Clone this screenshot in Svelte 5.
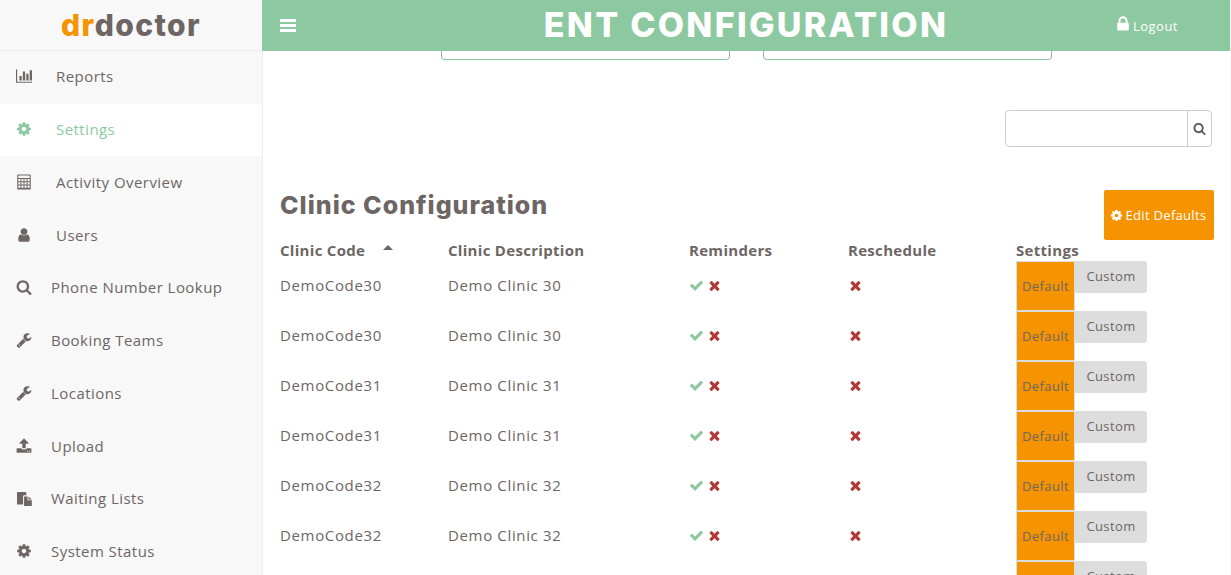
<script>
    // calculator: outer frame with a top band and a 4x3 grid of keys cut out
    let calc = 'M200 60h1392q60 0 60 60v1560q0 60-60 60h-1392q-60 0-60-60v-1560q0-60 60-60zM260 180v260h1272v-260z';
    for (const y of [560, 920, 1280]) {
        for (const x of [260, 604, 948, 1292]) {
            calc += `M${x} ${y}v260h240v-260z`;
        }
    }

    const icons = {
        chart: 'M640 896v512h-256v-512h256zm384-512v1024h-256v-1024h256zm1024 1152v128h-2048v-1536h128v1408h1920zm-640-896v768h-256v-768h256zm384-384v1152h-256v-1152h256z',
        cog: 'M1152 896q0-106-75-181t-181-75-181 75-75 181 75 181 181 75 181-75 75-181zm512-109v222q0 12-8 23t-20 13l-185 28q-19 54-39 91 35 50 107 138 10 12 10 25t-9 23q-27 37-99 108t-94 71q-12 0-26-9l-138-108q-44 23-91 38-16 136-29 186-7 28-36 28h-222q-14 0-24.5-8.5t-11.5-21.5l-28-184q-49-16-90-37l-141 107q-10 9-25 9-14 0-25-11-126-114-165-168-7-10-7-23 0-12 8-23 15-21 51-66.5t54-70.5q-27-50-41-99l-183-27q-13-2-21-12.5t-8-23.5v-222q0-12 8-23t19-13l186-28q14-46 39-92-40-57-107-138-10-12-10-24 0-10 9-23 26-36 98.5-107.5t94.5-71.5q13 0 26 10l138 107q44-23 91-38 16-136 29-186 7-28 36-28h222q14 0 24.5 8.5t11.5 21.5l28 184q49 16 90 37l142-107q9-9 24-9 13 0 25 10 129 119 165 170 7 8 7 22 0 12-8 23-15 21-51 66.5t-54 70.5q26 50 41 98l183 28q13 2 21 12.5t8 23.5z',
        table: calc,
        user: 'M1536 1399q0 109-62.5 187t-150.5 78h-854q-88 0-150.5-78t-62.5-187q0-85 8.5-160.5t31.5-152 58.5-131 94-89 134.5-34.5q131 128 313 128t313-128q76 0 134.5 34.5t94 89 58.5 131 31.5 152 8.5 160.5zm-256-887q0 159-112.5 271.5t-271.5 112.5-271.5-112.5-112.5-271.5 112.5-271.5 271.5-112.5 271.5 112.5 112.5 271.5z',
        search: 'M1216 832q0-185-131.5-316.5t-316.5-131.5-316.5 131.5-131.5 316.5 131.5 316.5 316.5 131.5 316.5-131.5 131.5-316.5zm512 832q0 52-38 90t-90 38q-54 0-90-38l-343-342q-179 124-399 124-143 0-273.5-55.5t-225-150-150-225-55.5-273.5 55.5-273.5 150-225 225-150 273.5-55.5 273.5 55.5 225 150 150 225 55.5 273.5q0 220-124 399l343 343q37 37 37 90z',
        wrench: 'M448 1472q0-26-19-45t-45-19-45 19-19 45 19 45 45 19 45-19 19-45zm644-420l-682 682q-37 37-90 37-52 0-91-37l-106-108q-38-36-38-90 0-53 38-91l681-681q39 98 114.5 173.5t173.5 114.5zm634-435q0 39-23 106-47 134-164.5 217.5t-258.5 83.5q-185 0-316.5-131.5t-131.5-316.5 131.5-316.5 316.5-131.5q58 0 121.5 16.5t107.5 46.5q16 11 16 28t-16 28l-293 169v224l193 107q5-3 79-48.5t135.5-81 70.5-35.5q15 0 23.5 10t8.5 25z',
        upload: 'M1344 1472q0-26-19-45t-45-19-45 19-19 45 19 45 45 19 45-19 19-45zm256 0q0-26-19-45t-45-19-45 19-19 45 19 45 45 19 45-19 19-45zm128-224v320q0 40-28 68t-68 28h-1472q-40 0-68-28t-28-68v-320q0-40 28-68t68-28h427q21 56 70.5 92t110.5 36h256q61 0 110.5-36t70.5-92h427q40 0 68 28t28 68zm-325-648q-17 40-59 40h-256v448q0 26-19 45t-45 19h-256q-26 0-45-19t-19-45v-448h-256q-42 0-59-40-17-39 14-69l448-448q18-19 45-19t45 19l448 448q31 30 14 69z',
        files: 'M112 300q0-70 70-70h900q70 0 70 70v300h-240q-120 0-120 120v900h-610q-70 0-70-70zM900 720h400v440h470v570q0 60-60 60h-750q-60 0-60-60zM1400 720l370 340h-370z',
        lock: 'M640 768h512v-192q0-106-75-181t-181-75-181 75-75 181v192zm832 96v576q0 40-28 68t-68 28h-960q-40 0-68-28t-28-68v-576q0-40 28-68t68-28h32v-192q0-184 132-316t316-132 316 132 132 316v192h32q40 0 68 28t28 68z',
        check: 'M1671 566q0 40-28 68l-724 724-136 136q-28 28-68 28t-68-28l-136-136-362-362q-28-28-28-68t28-68l136-136q28-28 68-28t68 28l294 295 656-657q28-28 68-28t68 28l136 136q28 28 28 68z',
        times: 'M1490 1322q0 40-28 68l-136 136q-28 28-68 28t-68-28l-294-294-294 294q-28 28-68 28t-68-28l-136-136q-28-28-28-68t28-68l294-294-294-294q-28-28-28-68t28-68l136-136q28-28 68-28t68 28l294 294 294-294q28-28 68-28t68 28l136 136q28 28 28 68t-28 68l-294 294 294 294q28 28 28 68z'
    };

    const links = [
        { name: 'Reports', icon: 'chart', wide: true },
        { name: 'Settings', icon: 'cog', wide: true, active: true },
        { name: 'Activity Overview', icon: 'table', wide: true },
        { name: 'Users', icon: 'user', wide: true },
        { name: 'Phone Number Lookup', icon: 'search' },
        { name: 'Booking Teams', icon: 'wrench' },
        { name: 'Locations', icon: 'wrench' },
        { name: 'Upload', icon: 'upload' },
        { name: 'Waiting Lists', icon: 'files' },
        { name: 'System Status', icon: 'cog' }
    ];

    const clinics = [30, 30, 31, 31, 32, 32, 33];
</script>

{#snippet icon(name, cls)}
    <svg class="icon {cls}" viewBox="0 0 1792 1792" fill="currentColor" aria-hidden="true"><path d={icons[name]} /></svg>
{/snippet}

<div class="page">
    <aside class="sidebar">
        <div class="logo"><span class="dr">dr</span>doctor</div>
        <nav>
            {#each links as link (link.name)}
                <a class="item" class:active={link.active} class:wide={link.wide} href="#{link.icon}">
                    {@render icon(link.icon, 'nav-icon')}
                    <span>{link.name}</span>
                </a>
            {/each}
        </nav>
    </aside>

    <main>
        <header>
            <div class="bars"><i></i><i></i><i></i></div>
            <h1>ENT CONFIGURATION</h1>
            <a class="logout" href="#logout">{@render icon('lock', 'lock')}Logout</a>
        </header>

        <div class="content">
            <div class="filters">
                <div class="filter"></div>
                <div class="filter"></div>
            </div>

            <div class="search">
                <input type="text" />
                <button>{@render icon('search', 'search-icon')}</button>
            </div>

            <div class="title-row">
                <h2>Clinic Configuration</h2>
                <button class="edit">{@render icon('cog', 'edit-icon')}Edit Defaults</button>
            </div>

            <table>
                <thead>
                    <tr>
                        <th class="code">Clinic Code<span class="caret"></span></th>
                        <th class="desc">Clinic Description</th>
                        <th class="rem">Reminders</th>
                        <th class="res">Reschedule</th>
                        <th>Settings</th>
                    </tr>
                </thead>
                <tbody>
                    {#each clinics as n, i (i)}
                        <tr>
                            <td><span class="cell">DemoCode{n}</span></td>
                            <td><span class="cell">Demo Clinic {n}</span></td>
                            <td><span class="marks">{@render icon('check', 'check')}{@render icon('times', 'times')}</span></td>
                            <td><span class="marks">{@render icon('times', 'times')}</span></td>
                            <td class="settings">
                                <div class="toggle">
                                    <button class="default">Default</button>
                                    <button class="custom">Custom</button>
                                </div>
                            </td>
                        </tr>
                    {/each}
                </tbody>
            </table>
        </div>
    </main>
</div>

<style>
    :global(body) {
        margin: 0;
        overflow: hidden;
        background: #f8f8f8;
    }
    .page {
        display: flex;
        height: 575px;
        overflow: hidden;
        font-family: "Open Sans", sans-serif;
        color: #6d6664;
        letter-spacing: 0.65px;
        font-size: 15px;
    }

    .sidebar {
        width: 262px;
        flex: none;
        background: #f8f8f8;
        border-right: 1px solid #eeeeee;
    }
    .logo {
        height: 50px;
        border-bottom: 1px solid #eeeeee;
        text-align: center;
        font-family: Inter, sans-serif;
        font-weight: 800;
        font-size: 30px;
        line-height: 50px;
        letter-spacing: 1.4px;
    }
    .dr {
        color: #f59300;
    }
    nav {
        display: flex;
        flex-direction: column;
        margin-top: -0.1px;
    }
    .item {
        display: flex;
        align-items: center;
        box-sizing: border-box;
        height: 52.78px;
        padding: 0 0 2px 51px;
        color: #6d6664;
        text-decoration: none;
        position: relative;
        font-size: 15px;
        letter-spacing: 0.45px;
    }
    .item.wide {
        padding-left: 56px;
    }
    .item.active {
        background: #ffffff;
        color: #8dc9a0;
    }
    .nav-icon {
        position: absolute;
        left: 16px;
        top: 50%;
        width: 16px;
        height: 16px;
        margin-top: -9px;
    }

    main {
        flex: 1;
        min-width: 0;
        margin-right: 1px;
        background: #ffffff;
    }
    header {
        height: 51px;
        margin-left: -1px;
        background: #8dc9a0;
        display: flex;
        align-items: center;
        position: relative;
        color: #ffffff;
    }
    .bars {
        display: flex;
        flex-direction: column;
        gap: 2px;
        margin: -1px 0 0 18px;
    }
    .bars i {
        display: block;
        width: 16px;
        height: 3px;
        background: #ffffff;
    }
    h1 {
        position: absolute;
        left: 0;
        right: 0;
        top: 0;
        margin: 0;
        text-align: center;
        font-family: Inter, sans-serif;
        font-weight: 800;
        font-size: 34px;
        line-height: 49px;
        letter-spacing: 2.3px;
    }
    .logout {
        margin-left: auto;
        margin-right: 52px;
        color: #ffffff;
        text-decoration: none;
        font-size: 13px;
        letter-spacing: 0.5px;
        display: flex;
        align-items: center;
    }
    .lock {
        width: 18px;
        height: 18px;
        margin: -4px 1px 0 0;
    }

    .content {
        padding: 0 16px 0 17px;
    }
    .filters {
        display: flex;
        gap: 33px;
        margin-left: 161px;
    }
    .filter {
        width: 287px;
        height: 8px;
        border: 1px solid #9fb0a5;
        border-bottom-color: #8dc9a0;
        border-top: none;
        border-radius: 0 0 4px 4px;
    }
    .search {
        display: flex;
        width: 207px;
        height: 37px;
        margin: 50px 2px 0 auto;
        box-sizing: border-box;
        border: 1px solid #cccccc;
        border-radius: 4px;
    }
    .search input {
        flex: 1;
        min-width: 0;
        border: none;
        outline: none;
        background: transparent;
        padding: 0;
    }
    .search button {
        width: 24px;
        padding: 0;
        border: none;
        border-left: 1px solid #cccccc;
        background: transparent;
        color: #5f5a5a;
        display: flex;
        align-items: center;
        justify-content: center;
    }
    .search-icon {
        width: 13px;
        height: 13px;
    }
    .title-row {
        display: flex;
        justify-content: space-between;
        margin-top: 43px;
        height: 50px;
    }
    h2 {
        margin: 0;
        font-family: Inter, sans-serif;
        font-weight: 800;
        font-size: 25px;
        line-height: 30px;
        letter-spacing: 1px;
    }
    .edit {
        width: 110px;
        height: 50px;
        padding: 0 2px 0 0;
        border: none;
        border-radius: 2px;
        background: #f59300;
        color: #ffffff;
        font-family: inherit;
        font-size: 13px;
        letter-spacing: 0.3px;
        display: flex;
        align-items: center;
        justify-content: center;
        white-space: nowrap;
    }
    .edit-icon {
        width: 13px;
        height: 13px;
        margin-right: 3px;
    }

    table {
        border-collapse: collapse;
        table-layout: fixed;
        width: 930px;
    }
    th {
        padding: 0;
        height: 21px;
        text-align: left;
        font-weight: 700;
        font-size: 15px;
        line-height: 21px;
        vertical-align: top;
        letter-spacing: 0.3px;
    }
    th.code {
        width: 168px;
        position: relative;
    }
    th.desc {
        width: 241px;
    }
    th.rem {
        width: 159px;
    }
    th.res {
        width: 168px;
    }
    .caret {
        position: absolute;
        left: 103px;
        top: 5px;
        border: 5px solid transparent;
        border-top: none;
        border-bottom-color: #6d6664;
    }
    td {
        padding: 0;
        height: 50px;
        vertical-align: middle;
    }
    .cell {
        display: block;
        margin-top: -2px;
    }
    .marks {
        display: flex;
        align-items: center;
        margin-top: -1px;
    }
    .check {
        width: 15px;
        height: 15px;
        color: #8dc9a0;
        margin-right: 3px;
    }
    .times {
        width: 15px;
        height: 15px;
        color: #b03a3a;
    }
    .toggle {
        display: flex;
        align-items: flex-start;
        height: 50px;
    }
    .toggle button {
        padding: 0;
        font-family: inherit;
        font-size: 13px;
        letter-spacing: 0.4px;
        color: #6d6664;
    }
    .default {
        width: 59px;
        height: 50px;
        background: #f59300;
        border: 1px solid #dddddd;
        border-radius: 0;
    }
    .toggle .custom {
        width: 72px;
        height: 32px;
        padding-bottom: 2px;
        background: #dddddd;
        border: none;
        border-radius: 0 3px 3px 0;
    }
</style>
